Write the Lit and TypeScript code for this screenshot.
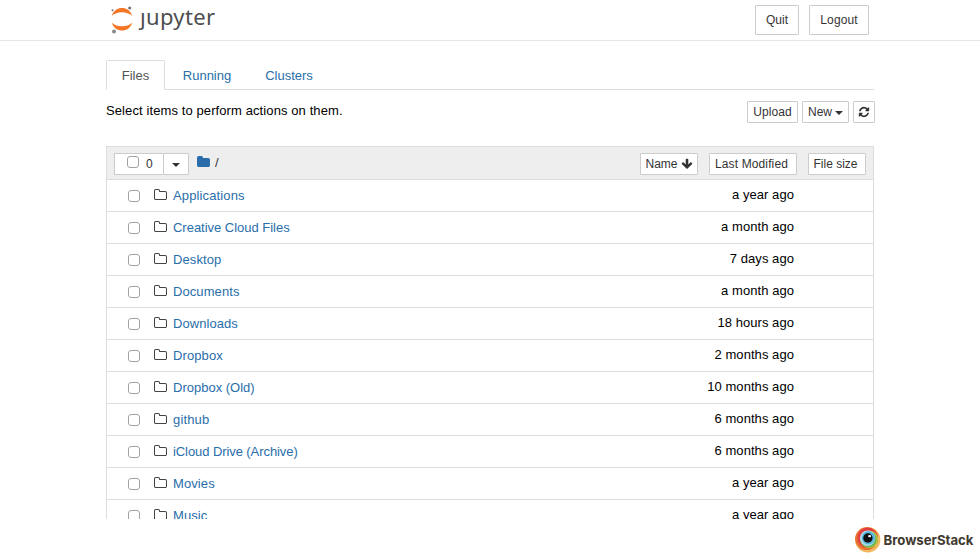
import { LitElement, html, css, svg } from "lit";
import { customElement, property } from "lit/decorators.js";

const ICONS: Record<string, string> = {
  folderOpen:
    "M1536 1312V608q0-40-28-68t-68-28H736q-40 0-68-28t-28-68v-64q0-40-28-68t-68-28H224q-40 0-68 28t-28 68v960q0 40 28 68t68 28h1216q40 0 68-28t28-68zm128-704v704q0 92-66 158t-158 66H224q-92 0-158-66T0 1312V352q0-92 66-158t158-66h320q92 0 158 66t66 158v32h672q92 0 158 66t66 158z",
  folder:
    "M1664 608v704q0 92-66 158t-158 66H224q-92 0-158-66T0 1312V352q0-92 66-158t158-66h320q92 0 158 66t66 158v32h672q92 0 158 66t66 158z",
  refresh:
    "M1639 1056q0 5-1 7-64 268-268 434.5T892 1664q-146 0-282.5-55T366 1452l-129 129q-19 19-45 19t-45-19-19-45v-448q0-26 19-45t45-19h448q26 0 45 19t19 45-19 45l-137 137q71 66 161 102t187 36q134 0 250-65t186-179q11-17 53-117 8-23 30-23h192q13 0 22.5 9.5t9.5 22.5zm25-800v448q0 26-19 45t-45 19h-448q-26 0-45-19t-19-45 19-45l138-138Q1097 384 896 384q-134 0-250 65T460 628q-11 17-53 117-8 23-30 23H178q-13 0-22.5-9.5T146 736v-7q65-268 270-434.5T896 128q146 0 284 55.5T1425 340l130-129q19-19 45-19t45 19 19 45z",
  down:
    "M1675 832q0 53-37 90l-651 652q-39 37-91 37-53 0-90-37L155 922q-38-36-38-90 0-53 38-91l74-75q39-37 91-37 53 0 90 37l294 294V256q0-52 38-90t90-38h128q52 0 90 38t38 90v704l294-294q37-37 90-37 52 0 91 37l75 75q37 39 37 91z",
};

@customElement("fa-icon")
class FaIcon extends LitElement {
  @property() name = "folder";
  static styles = css`
    :host { display: block; width: 14px; height: 14px; flex: none; }
    svg { display: block; width: 100%; height: 100%; fill: currentColor; }
  `;
  render() {
    return html`<svg viewBox="0 0 1792 1792">${svg`<path d=${ICONS[this.name]}></path>`}</svg>`;
  }
}

@customElement("file-row")
class FileRow extends LitElement {
  @property() name = "";
  @property() modified = "";
  @property({ type: Number }) tracking = 0;
  static styles = css`
    :host { display: flex; height: 31px; border-bottom: 1px solid #ddd; align-items: flex-start; }
    .box { box-sizing: border-box; width: 12px; height: 12px; margin: 10px 14px 0 21px; border: 1px solid #a2a2a2; border-radius: 3px; background: #fff; }
    fa-icon { color: #444; margin-top: 8px; }
    .name { color: #296eaa; margin: 8px 0 0 5px; line-height: 16px; flex: 1; }
    .time { margin: 7px 79px 0 0; line-height: 16px; letter-spacing: 0.06px; }
  `;
  render() {
    return html`<span class="box"></span><fa-icon name="folderOpen"></fa-icon>
      <a class="name" style="letter-spacing:${this.tracking}px">${this.name}</a><span class="time">${this.modified}</span>`;
  }
}

const FILES: [string, string, number][] = [
  ["Applications", "a year ago", 0.13],
  ["Creative Cloud Files", "a month ago", -0.02],
  ["Desktop", "7 days ago", 0.1],
  ["Documents", "a month ago", 0.08],
  ["Downloads", "18 hours ago", 0.06],
  ["Dropbox", "2 months ago", 0.1],
  ["Dropbox (Old)", "10 months ago", 0],
  ["github", "6 months ago", 0.15],
  ["iCloud Drive (Archive)", "6 months ago", -0.08],
  ["Movies", "a year ago", 0.1],
  ["Music", "a year ago", 0.1],
];

@customElement("app-root")
class AppRoot extends LitElement {
  static styles = css`
    :host { display: flex; flex-direction: column; height: 559px; background: #fff; color: #000; font: 13px/16px "Liberation Sans", Arial, sans-serif; overflow: hidden; }
    .page { height: 519px; overflow: hidden; }
    header { display: flex; box-sizing: border-box; height: 41px; border-bottom: 1px solid #e7e7e7; padding: 5px 111px 0 106px; gap: 10px; }
    .logo { display: block; width: 120px; height: 34px; margin-top: -3px; margin-right: auto; }
    .btn { box-sizing: border-box; display: flex; align-items: center; justify-content: center; height: 22px; border: 1px solid #ccc; border-radius: 1px; background: #fff; color: #333; font-size: 12px; white-space: nowrap; }
    .top { height: 30px; }
    .quit { width: 44px; } .logout { width: 60px; letter-spacing: 0.1px; }
    .tabs { display: flex; box-sizing: border-box; width: 768px; height: 30px; margin: 19px 0 0 106px; border-bottom: 1px solid #ddd; color: #296eaa; }
    .tab { box-sizing: border-box; height: 30px; padding-top: 8px; text-align: center; }
    .files { width: 59px; padding-top: 7px; border: 1px solid #ddd; border-bottom-color: #fff; border-radius: 2px 2px 0 0; color: #555; }
    .running { width: 84px; } .clusters { width: 80px; }
    .actions { display: flex; width: 769px; height: 22px; margin: 11px 0 0 106px; gap: 4px; }
    .hint { flex: 1; margin-top: 2px; letter-spacing: 0.1px; }
    .upload { width: 51px; letter-spacing: 0.1px; } .new { width: 47px; gap: 4px; } .refresh { width: 22px; }
    .refresh fa-icon { width: 12px; height: 12px; margin-right: 1px; }
    .caret { border: 4px solid transparent; border-top-color: #333; border-bottom: 0; }
    .new .caret, .drop .caret { margin-top: 2px; }
    .new .caret { margin-left: -1px; }
    .list { box-sizing: border-box; width: 768px; margin: 23px 0 0 106px; border: 1px solid #ddd; }
    .head { display: flex; box-sizing: border-box; height: 33px; background: #eee; border-bottom: 1px solid #ddd; padding: 6px 7px 0; }
    .select { width: 49px; justify-content: flex-start; padding-left: 12px; gap: 7px; border-right: 0; }
    .box { box-sizing: border-box; width: 12px; height: 12px; margin-top: -4px; border: 1px solid #a2a2a2; border-radius: 3px; }
    .drop { width: 26px; }
    .crumb { display: flex; flex: 1; color: #333; margin-left: 8px; gap: 4px; }
    .crumb fa-icon { color: #296eaa; margin-top: 2px; }
    .slash { margin-top: 2px; }
    .sname { width: 58px; gap: 3px; margin-right: 11px; } .smod { width: 88px; margin-right: 11px; padding-right: 3px; letter-spacing: 0.12px; } .ssize { width: 58px; padding-right: 3px; }
    .sname fa-icon { width: 12px; height: 12px; }
    .brand { display: flex; height: 40px; justify-content: flex-end; }
    .brand svg { display: block; width: 130px; height: 40px; }
    text { white-space: pre; }
  `;
  render() {
    return html`
      <div class="page">
        <header>
          <svg class="logo" viewBox="106 2 120 34">
            <path fill="#f37726" d="M111.800 15.800C113.500 10.500 117.500 8 122 8s8.500 2.500 10.200 7.800C129.500 13.400 126 12.200 122 12.200s-7.500 1.200-10.200 3.600zM111.800 22.700C113.500 28 117.500 30.500 122 30.500s8.500-2.500 10.200-7.800C129.500 25.100 126 26.300 122 26.300s-7.500-1.200-10.200-3.600z"></path>
            <circle cx="129.700" cy="8" r="1.600" fill="#767677"></circle>
            <circle cx="112.500" cy="10.300" r="1" fill="#767677"></circle>
            <circle cx="114" cy="31.400" r="2" fill="#8a8a8a"></circle>
            <text x="140" y="25" font-family="Noto Sans, sans-serif" font-size="22" fill="#4e4e4e" textLength="75" lengthAdjust="spacing">ȷupyter</text>
          </svg>
          <span class="btn top quit">Quit</span><span class="btn top logout">Logout</span>
        </header>
        <nav class="tabs">
          <span class="tab files">Files</span><span class="tab running">Running</span><span class="tab clusters">Clusters</span>
        </nav>
        <div class="actions">
          <span class="hint">Select items to perform actions on them.</span>
          <span class="btn upload">Upload</span>
          <span class="btn new">New<i class="caret"></i></span>
          <span class="btn refresh"><fa-icon name="refresh"></fa-icon></span>
        </div>
        <section class="list">
          <div class="head">
            <span class="btn select"><i class="box"></i>0</span><span class="btn drop"><i class="caret"></i></span>
            <span class="crumb"><fa-icon name="folder"></fa-icon><span class="slash">/</span></span>
            <span class="btn sname">Name<fa-icon name="down"></fa-icon></span>
            <span class="btn smod">Last Modified</span>
            <span class="btn ssize">File size</span>
          </div>
          ${FILES.map(([n, m, t]) => html`<file-row .name=${n} .modified=${m} .tracking=${t}></file-row>`)}
        </section>
      </div>
      <footer class="brand">
        <svg viewBox="850 519 130 40">
          <circle cx="867.700" cy="539.700" r="12.700" fill="#f4b960"></circle>
          <circle cx="866.600" cy="538.700" r="11.400" fill="#e66f32"></circle>
          <circle cx="867.800" cy="537.700" r="10.200" fill="#e43c41"></circle>
          <circle cx="869.200" cy="539.200" r="8.800" fill="#bdd041"></circle>
          <circle cx="868.600" cy="539.400" r="8.200" fill="#6db54c"></circle>
          <circle cx="867.600" cy="538.300" r="7.700" fill="#aedaea"></circle>
          <circle cx="868.400" cy="537.800" r="6.600" fill="#56b8de"></circle>
          <circle cx="867.900" cy="538" r="4.700" fill="#111"></circle>
          <ellipse cx="869.600" cy="536.200" rx="1.500" ry="1.100" fill="#fff"></ellipse>
          <text x="883.500" y="545" font-family="Inter, sans-serif" font-weight="700" font-size="13.500" fill="#3f392f" textLength="90" lengthAdjust="spacingAndGlyphs">BrowserStack</text>
        </svg>
      </footer>
    `;
  }
}
